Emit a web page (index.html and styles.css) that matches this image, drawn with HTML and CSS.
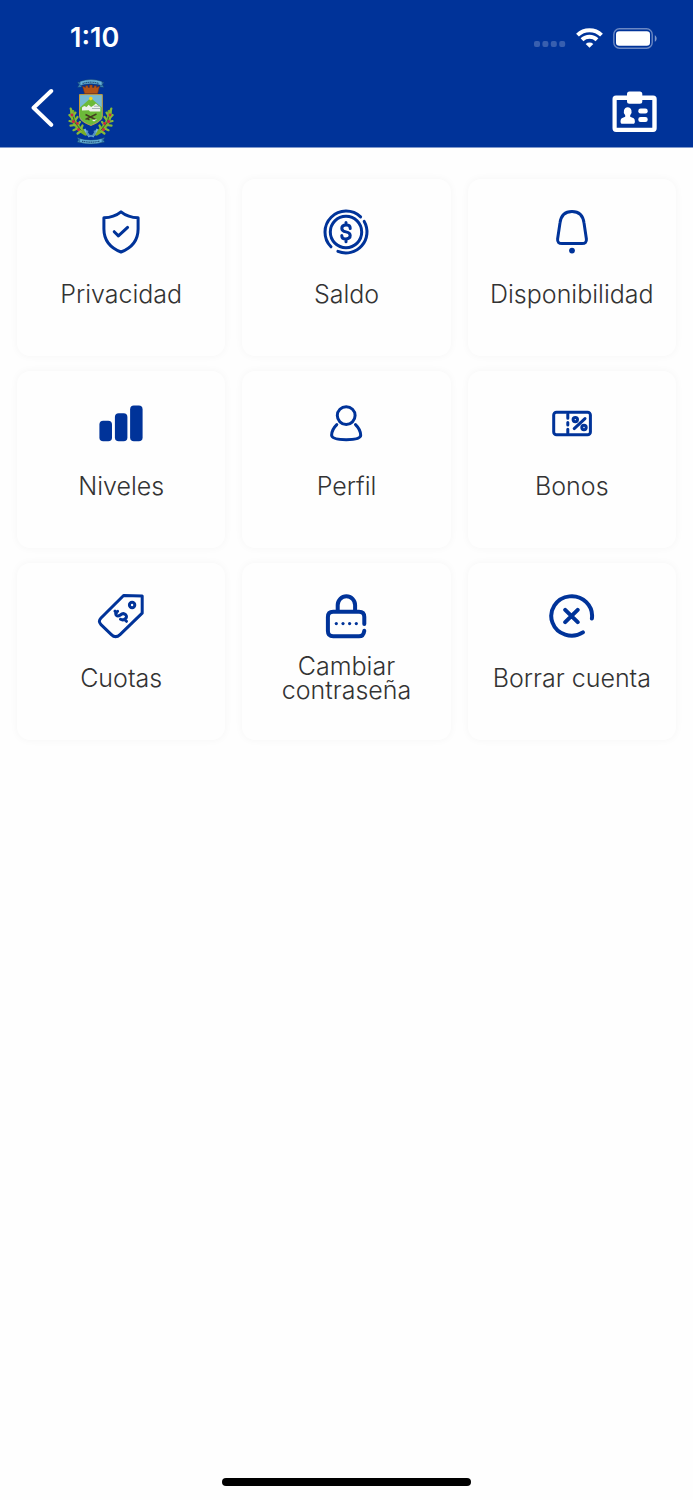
FILE: index.html
```html
<!DOCTYPE html>
<html lang="es">
<head>
<meta charset="utf-8">
<meta name="viewport" content="width=device-width, initial-scale=1">
<title>Ajustes</title>
<link rel="stylesheet" href="styles.css">
</head>
<body>
<header class="header">
  <div class="status">
    <span class="time">1:10</span>
    <div class="indicators">
      <svg class="signal" width="32" height="20" viewBox="0 0 32 20" fill="#fff" fill-opacity=".22"><rect y="13" width="6" height="6" rx="2"/><rect x="8.4" y="13" width="6" height="6" rx="2"/><rect x="16.8" y="13" width="6" height="6" rx="2"/><rect x="25.2" y="13" width="6" height="6" rx="2"/></svg>
      <svg width="27" height="20" viewBox="0 0 27 20" fill="none" stroke="#fff" stroke-width="4"><path d="M1.500 7.100a17.200 17.200 0 0 1 24 0"/><path d="M6 11.800a10.800 10.800 0 0 1 15 0"/><path d="M13.500 19.800 9.700 16a5.600 5.600 0 0 1 7.600 0Z" fill="#fff" stroke="none"/></svg>
      <svg width="44" height="21" viewBox="0 0 44 21"><rect x=".8" y=".8" width="38.4" height="19.4" rx="5.6" fill="none" stroke="#fff" stroke-opacity=".42" stroke-width="1.4"/><rect x="3" y="3.3" width="34" height="14.4" rx="3.2" fill="#fff"/><path d="M41.8 7.2c2.4 1.3 2.4 5.3 0 6.6Z" fill="#fff" fill-opacity=".5"/></svg>
    </div>
  </div>
  <nav class="bar">
    <a class="back" href="#" aria-label="Volver">
      <svg width="24" height="40" viewBox="0 0 24 40" fill="none" stroke="#fff" stroke-width="4" stroke-linecap="round" stroke-linejoin="round"><path d="M20.200 3 2.600 19.800 20.200 36.800"/></svg>
    </a>
    <svg class="crest" width="46" height="66" viewBox="0 0 46 66">
      <g fill="#3b8fc0" stroke="#153f6b" stroke-width=".5">
        <path d="m9.500 3.200 4-.2v5l-4 .2 1.700-2.500ZM36 3.200 32 3v5l4 .2-1.700-2.500Z"/>
        <path d="M12 2.400q11-3.600 22 0v4.200q-11-3.600-22 0Z" fill="#65b2d8"/>
      </g>
      <path d="M14.500 4.400q8.300-2.400 16.600 0" fill="none" stroke="#234f79" stroke-width="1.200" stroke-dasharray="1.300 .5"/>
      <path d="m14.500 7.200 3 1.200v-1.600h2.500v1.600h1.600V6h2.800v2.400H26V6.800h2.500v1.600l3-1.200-1.900 7.500H16.600Z" fill="#b45417" stroke="#733010" stroke-width=".5"/>
      <g stroke="#79ad26" stroke-width="4.400" fill="none" stroke-linecap="round">
        <path d="M4.400 33Q4 46 17.500 54.500M41.600 33Q42 46 28.500 54.500"/>
      </g>
      <g stroke="#87ba36" stroke-width="2.200" stroke-linecap="round">
        <path d="M4 35 2.700 29.500M4.300 39 1.400 36M5.400 43 1.500 42M7 46 2.500 46.600M9.800 49.300 5.500 51.200M13 52 9.600 54.500M4.500 38 7.500 33.600M6 42.600 9.500 38M9 47 12 42.800M12.500 51 14.500 46.500M42 35 43.300 29.500M41.700 39 44.600 36M40.600 43 44.500 42M39 46 43.500 46.600M36.200 49.300 40.500 51.200M33 52 36.400 54.500M41.500 38 38.500 33.600M40 42.600 36.500 38M37 47 34 42.800M33.500 51 31.500 46.500"/>
      </g>
      <path d="M5 37.500 7.200 44 13.200 51.500M41 37.500 38.800 44 32.800 51.500" fill="none" stroke="#2b6430" stroke-width=".9"/>
      <g fill="#cc2443"><circle cx="4" cy="36" r="1.400"/><circle cx="5.300" cy="42.500" r="1.500"/><circle cx="9.400" cy="44.500" r="1.400"/><circle cx="10.500" cy="50.500" r="1.500"/><circle cx="42" cy="36" r="1.400"/><circle cx="40.700" cy="42.500" r="1.500"/><circle cx="36.600" cy="44.500" r="1.400"/><circle cx="35.500" cy="50.500" r="1.500"/></g>
      <path d="M11.500 15.600h22.800v21.600q0 5-11.400 9.300-11.400-4.300-11.400-9.300Z" fill="#76b9d3" stroke="#c49a39"/>
      <path d="M12 28.500 22.800 19 33.800 28.500v8.700q0 4.500-11 8.700-10.800-4.200-10.800-8.700Z" fill="#6cba39"/>
      <circle cx="22.800" cy="19.600" r="1.800" fill="#f4d61d"/>
      <path d="M14 31.500v-3l2.200-1.600 2.400 1 2-2.200 2.500 2.200 2.500-1.400 2.300-2 2.400 2.200 2 1.200v4.500H22l-1.200-1.200Z" fill="#edf2ed"/>
      <path d="M24 29.500h8.400M26 27.200h5.400" stroke="#a0adb0" stroke-width=".9"/>
      <path d="m17.500 35.500 10 5M28.500 35l-11 5.300M18.500 39.300l3 1.500" stroke="#433b20" stroke-width="1.400"/>
      <path d="m24 41 5-.8-3 2.400Z" fill="#eee"/>
      <path d="m16.500 50 5 8M29.500 50l-5 8" stroke="#79b6da" stroke-width="2"/>
      <path d="M19.500 51.500q-1.500 5 3.500 5.500 5-.5 3.500-5.500" fill="none" stroke="#528fbd" stroke-width="1.800"/>
      <g fill="#3b8fc0" stroke="#153f6b" stroke-width=".5">
        <path d="m9 58.500 4 1v4.500l-4-1.100 1.600-2ZM36.800 58.500l-4 1v4.500l4-1.100-1.600-2Z"/>
        <path d="M11.700 59.400q11.200 3.200 22.400 0v4q-11.200 3.200-22.400 0Z" fill="#65b2d8"/>
      </g>
      <path d="M14 62.100q8.800 2 17.800 0" fill="none" stroke="#234f79" stroke-width="1.200" stroke-dasharray="1.300 .5"/>
    </svg>
    <button class="card-id" type="button" aria-label="Identificación">
      <svg width="46" height="42" viewBox="0 0 46 42" fill="#fff"><path fill-rule="evenodd" d="M4 4.500h11V3q0-2.500 2.500-2.500h10.300q2.500 0 2.500 2.500v1.500h10.800q3.600 0 3.600 3.600v29.200q0 3.600-3.600 3.600H4.100Q.5 40.900.5 37.300V8.100Q.5 4.500 4 4.500Z M4.700 9v27.700H40.300V9H30.300v1.200q0 2.500-2.500 2.500H17.500q-2.500 0-2.500-2.500V9Z"/><path d="M15.700 16.200a4.100 4.600 0 0 0-2.500 8.100v1.400l-3.500 1.600q-1.200.6-1.200 3.300 0 2.100 1 2.100h12.400q1 0 1-2.100 0-2.700-1.200-3.300l-3.500-1.600v-1.400a4.100 4.600 0 0 0-2.500-8.100Z"/><rect x="26.300" y="17.500" width="9.400" height="5" rx="2.300"/><rect x="26.300" y="26" width="9.400" height="5" rx="2.300"/></svg>
    </button>
  </nav>
</header>
<main class="grid">
  <a class="tile" href="#">
    <svg class="icon" viewBox="0 0 48 48"><path d="M24 3.800Q17 9.500 6.900 9.700V21Q7 37.500 24 44 41 37.500 41.100 21V9.700Q31 9.500 24 3.800Z"/><path d="m17.200 23.700 4.200 4.200 9.200-8.500"/></svg>
    <span class="label">Privacidad</span>
  </a>
  <a class="tile" href="#">
    <svg class="icon" viewBox="0 0 48 48"><circle cx="24" cy="24" r="15.700"/><path d="M38.600 8.900A21 21 0 0 0 9.200 9.200 21 21 0 0 0 9 38.800M42.200 13.400A21.100 21.100 0 0 1 15.900 43.400"/><path d="M28.200 20.500v-.6q0-2.900-4.200-2.900t-4.200 3.200q0 2.900 4.200 3.700t4.200 3.700q0 3.300-4.200 3.300t-4.200-3v-.5M24 14.500V17M24 31v2.700"/></svg>
    <span class="label">Saldo</span>
  </a>
  <a class="tile" href="#">
    <svg class="icon" viewBox="0 0 48 48"><path d="M24 3.400q10.600 0 12 11.500L38.400 31q.4 4.600-4.400 4.600H14q-4.800 0-4.400-4.600L12 14.900Q13.400 3.400 24 3.400Z"/><circle class="solid" cx="24" cy="42.600" r="2.900"/></svg>
    <span class="label">Disponibilidad</span>
  </a>
  <a class="tile" href="#">
    <svg class="icon" viewBox="0 0 48 48"><g class="solid"><rect x="2.400" y="20.800" width="12.600" height="20.400" rx="3.800"/><rect x="17.900" y="13.300" width="12.500" height="27.900" rx="3.800"/><rect x="33.100" y="5.600" width="12.500" height="35.600" rx="3.800"/></g></svg>
    <span class="label">Niveles</span>
  </a>
  <a class="tile" href="#">
    <svg class="icon" viewBox="0 0 48 48"><circle cx="24.200" cy="15.600" r="8.900"/><path d="M14.800 24.600Q9.700 29.500 9.600 35.300 9.800 39.700 24.200 39.700T38.700 35.300Q38.600 29.500 33.500 24.600"/></svg>
    <span class="label">Perfil</span>
  </a>
  <a class="tile" href="#">
    <svg class="icon" viewBox="0 0 48 48"><rect x="5.700" y="12.300" width="36.700" height="22.400" rx="2.800"/><path d="M19.800 14v4.200M19.800 22.500v2.500M19.800 29.300v4M26.200 28.600 37 18.600"/><circle cx="27.300" cy="19.600" r="2.200"/><circle cx="36" cy="27.500" r="2.200"/></svg>
    <span class="label">Bonos</span>
  </a>
  <a class="tile" href="#">
    <svg class="icon" viewBox="0 0 48 48"><path d="M26.600 3.500 45.200 4V21.200L23 42.600Q18.600 46.800 14.400 42.600L4 32.600Q.7 29.400 4 26Z"/><circle cx="35.100" cy="13" r="2.700"/><path d="M20.600 19.300q-2.700 1-1.600 3.500 1.400 2.500 4.300.2 3-2.600 5.200-.4 2.200 2.500-.4 4.300-2.400 1.700-4.600.4M18 19.200l1.500 1.700M27.400 27.200l2.100 2.100"/></svg>
    <span class="label">Cuotas</span>
  </a>
  <a class="tile" href="#">
    <svg class="icon bold" viewBox="0 0 48 48"><path d="M15.700 19.500V13a8.700 8.700 0 0 1 17.400 0v6.500M42.300 32V25q0-5.300-5.300-5.300H11.200q-5.300 0-5.300 5.300V39q0 5.300 5.300 5.300H37q4.600 0 5.300-5.600"/><g class="solid"><circle cx="14.300" cy="31.600" r="1.600"/><circle cx="21" cy="31.600" r="1.600"/><circle cx="27.600" cy="31.600" r="1.600"/><circle cx="34.300" cy="31.600" r="1.600"/></g></svg>
    <span class="label">Cambiar contraseña</span>
  </a>
  <a class="tile" href="#">
    <svg class="icon heavy" viewBox="0 0 48 48"><path d="M43.900 26.500A20.400 19.700 0 1 0 34.900 40.400M17.200 17.800 29.700 30.200M29.700 17.800 17.200 30.200"/></svg>
    <span class="label">Borrar cuenta</span>
  </a>
</main>
<footer class="home"><div class="home-line"></div></footer>
</body>
</html>
```
FILE: styles.css
```css
* { box-sizing: border-box; }
body {
  margin: 0;
  min-height: 100vh;
  display: flex;
  flex-direction: column;
  background: #fefefe;
  color: #333;
  font-family: Inter, "Liberation Sans", sans-serif;
}
.header { background: #003399; border-bottom: 1px solid #8099cc; }
.status {
  display: flex;
  align-items: center;
  justify-content: space-between;
  height: 76px;
  padding: 0 36px 0 70px;
  color: #fff;
}
.time { font-size: 27px; font-weight: 600; line-height: 32px; }
.indicators { display: flex; align-items: center; gap: 10px; }
.bar { display: flex; align-items: center; height: 71px; padding: 0 35px 0 31px; }
.back { display: flex; padding-bottom: 8px; }
.crest { margin-left: 13px; }
.card-id { display: flex; margin-left: auto; padding: 0; border: 0; background: none; }
.grid {
  display: grid;
  grid-template-columns: repeat(3, 1fr);
  gap: 15px 17px;
  padding: 31px 17px;
}
.tile {
  display: flex;
  flex-direction: column;
  align-items: center;
  gap: 14px;
  min-height: 177px;
  padding: 29px 16px;
  border-radius: 13px;
  background: #fefefe;
  box-shadow: 0 0 8px rgba(0, 0, 0, 0.04);
  color: inherit;
  text-align: center;
  text-decoration: none;
}
.icon {
  width: 48px;
  height: 48px;
  fill: none;
  stroke: #003399;
  stroke-width: 3;
  stroke-linecap: round;
  stroke-linejoin: round;
}
.bold { stroke-width: 4; }
.heavy { stroke-width: 4; }
.solid { fill: #003399; stroke: none; }
.label {
  display: flex;
  align-items: center;
  min-height: 48px;
  font-size: 25px;
  font-weight: 300;
  line-height: 24px;
}
.home { display: flex; justify-content: center; margin-top: auto; padding-bottom: 14px; }
.home-line { width: 36%; height: 8px; border-radius: 4px; background: #000; }
```
